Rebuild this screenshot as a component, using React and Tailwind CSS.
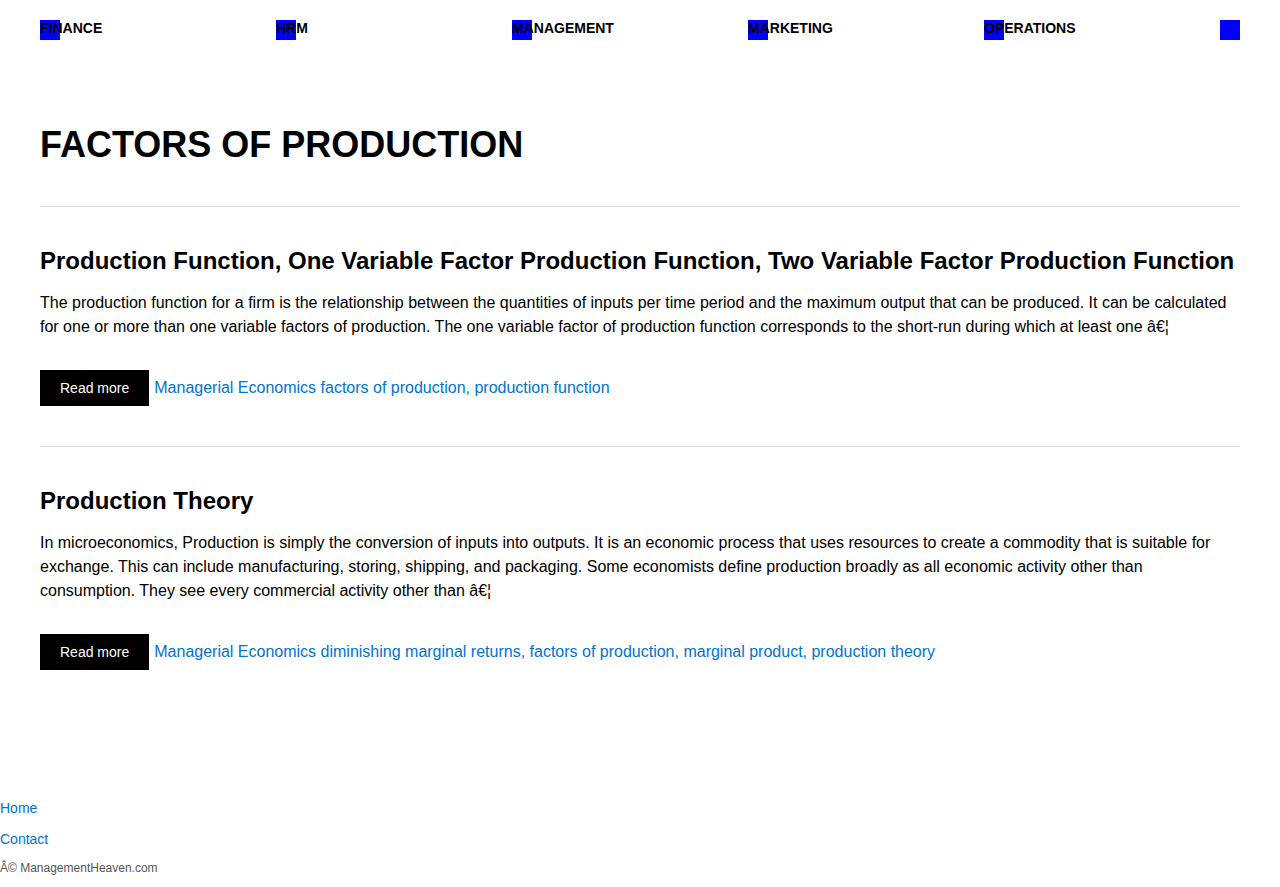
import React from 'react';

const navItems = ['FINANCE', 'HRM', 'MANAGEMENT', 'MARKETING', 'OPERATIONS', ''];

const posts = [
  {
    title:
      'Production Function, One Variable Factor Production Function, Two Variable Factor Production Function',
    excerpt:
      'The production function for a firm is the relationship between the quantities of inputs per time period and the maximum output that can be produced. It can be calculated for one or more than one variable factors of production. The one variable factor of production function corresponds to the short-run during which at least one â€¦',
    tags: 'Managerial Economics factors of production, production function',
  },
  {
    title: 'Production Theory',
    excerpt:
      'In microeconomics, Production is simply the conversion of inputs into outputs. It is an economic process that uses resources to create a commodity that is suitable for exchange. This can include manufacturing, storing, shipping, and packaging. Some economists define production broadly as all economic activity other than consumption. They see every commercial activity other than â€¦',
    tags:
      'Managerial Economics diminishing marginal returns, factors of production, marginal product, production theory',
  },
];

export default function App() {
  return (
    <div className="min-h-[887px] bg-white text-black font-['Liberation_Sans',Arial,sans-serif]">
      {/* Top nav */}
      <nav className="px-10 pt-5">
        <ul className="flex justify-between">
          {navItems.map((item, i) => (
            <li key={i} className="w-5 h-5 bg-[#0000ff]">
              <a className="block whitespace-nowrap text-[14px] leading-4 font-bold text-black">
                {item}
              </a>
            </li>
          ))}
        </ul>
      </nav>

      {/* Main */}
      <main className="px-10">
        <h1 className="mt-[83px] text-[36px] leading-[43px] font-bold">FACTORS OF PRODUCTION</h1>
        <div className="mt-10">
          {posts.map((post, i) => (
            <article key={i} className="pt-10 pb-10 border-t border-[#dddddd]">
              <h2 className="-mt-px text-[24px] leading-[29px] font-bold">{post.title}</h2>
              <p className="mt-[16px] text-[16px] leading-6">{post.excerpt}</p>
              <div className="mt-[31px] flex items-center">
                <a className="h-9 px-5 flex items-center bg-black text-white text-[14px]">Read more</a>
                <span className="ml-[5px] text-[16px] text-[#0073d0]">{post.tags}</span>
              </div>
            </article>
          ))}
        </div>
      </main>

      {/* Footer */}
      <footer className="mt-[88px]">
        <ul className="text-[14px] leading-5">
          <li>
            <a className="text-[#0073d0]">Home</a>
          </li>
          <li className="mt-[11px]">
            <a className="text-[#0073d0]">Contact</a>
          </li>
        </ul>
        <p className="mt-[11px] text-[12px] leading-4 text-[#555555]">Â© ManagementHeaven.com</p>
      </footer>
    </div>
  );
}
